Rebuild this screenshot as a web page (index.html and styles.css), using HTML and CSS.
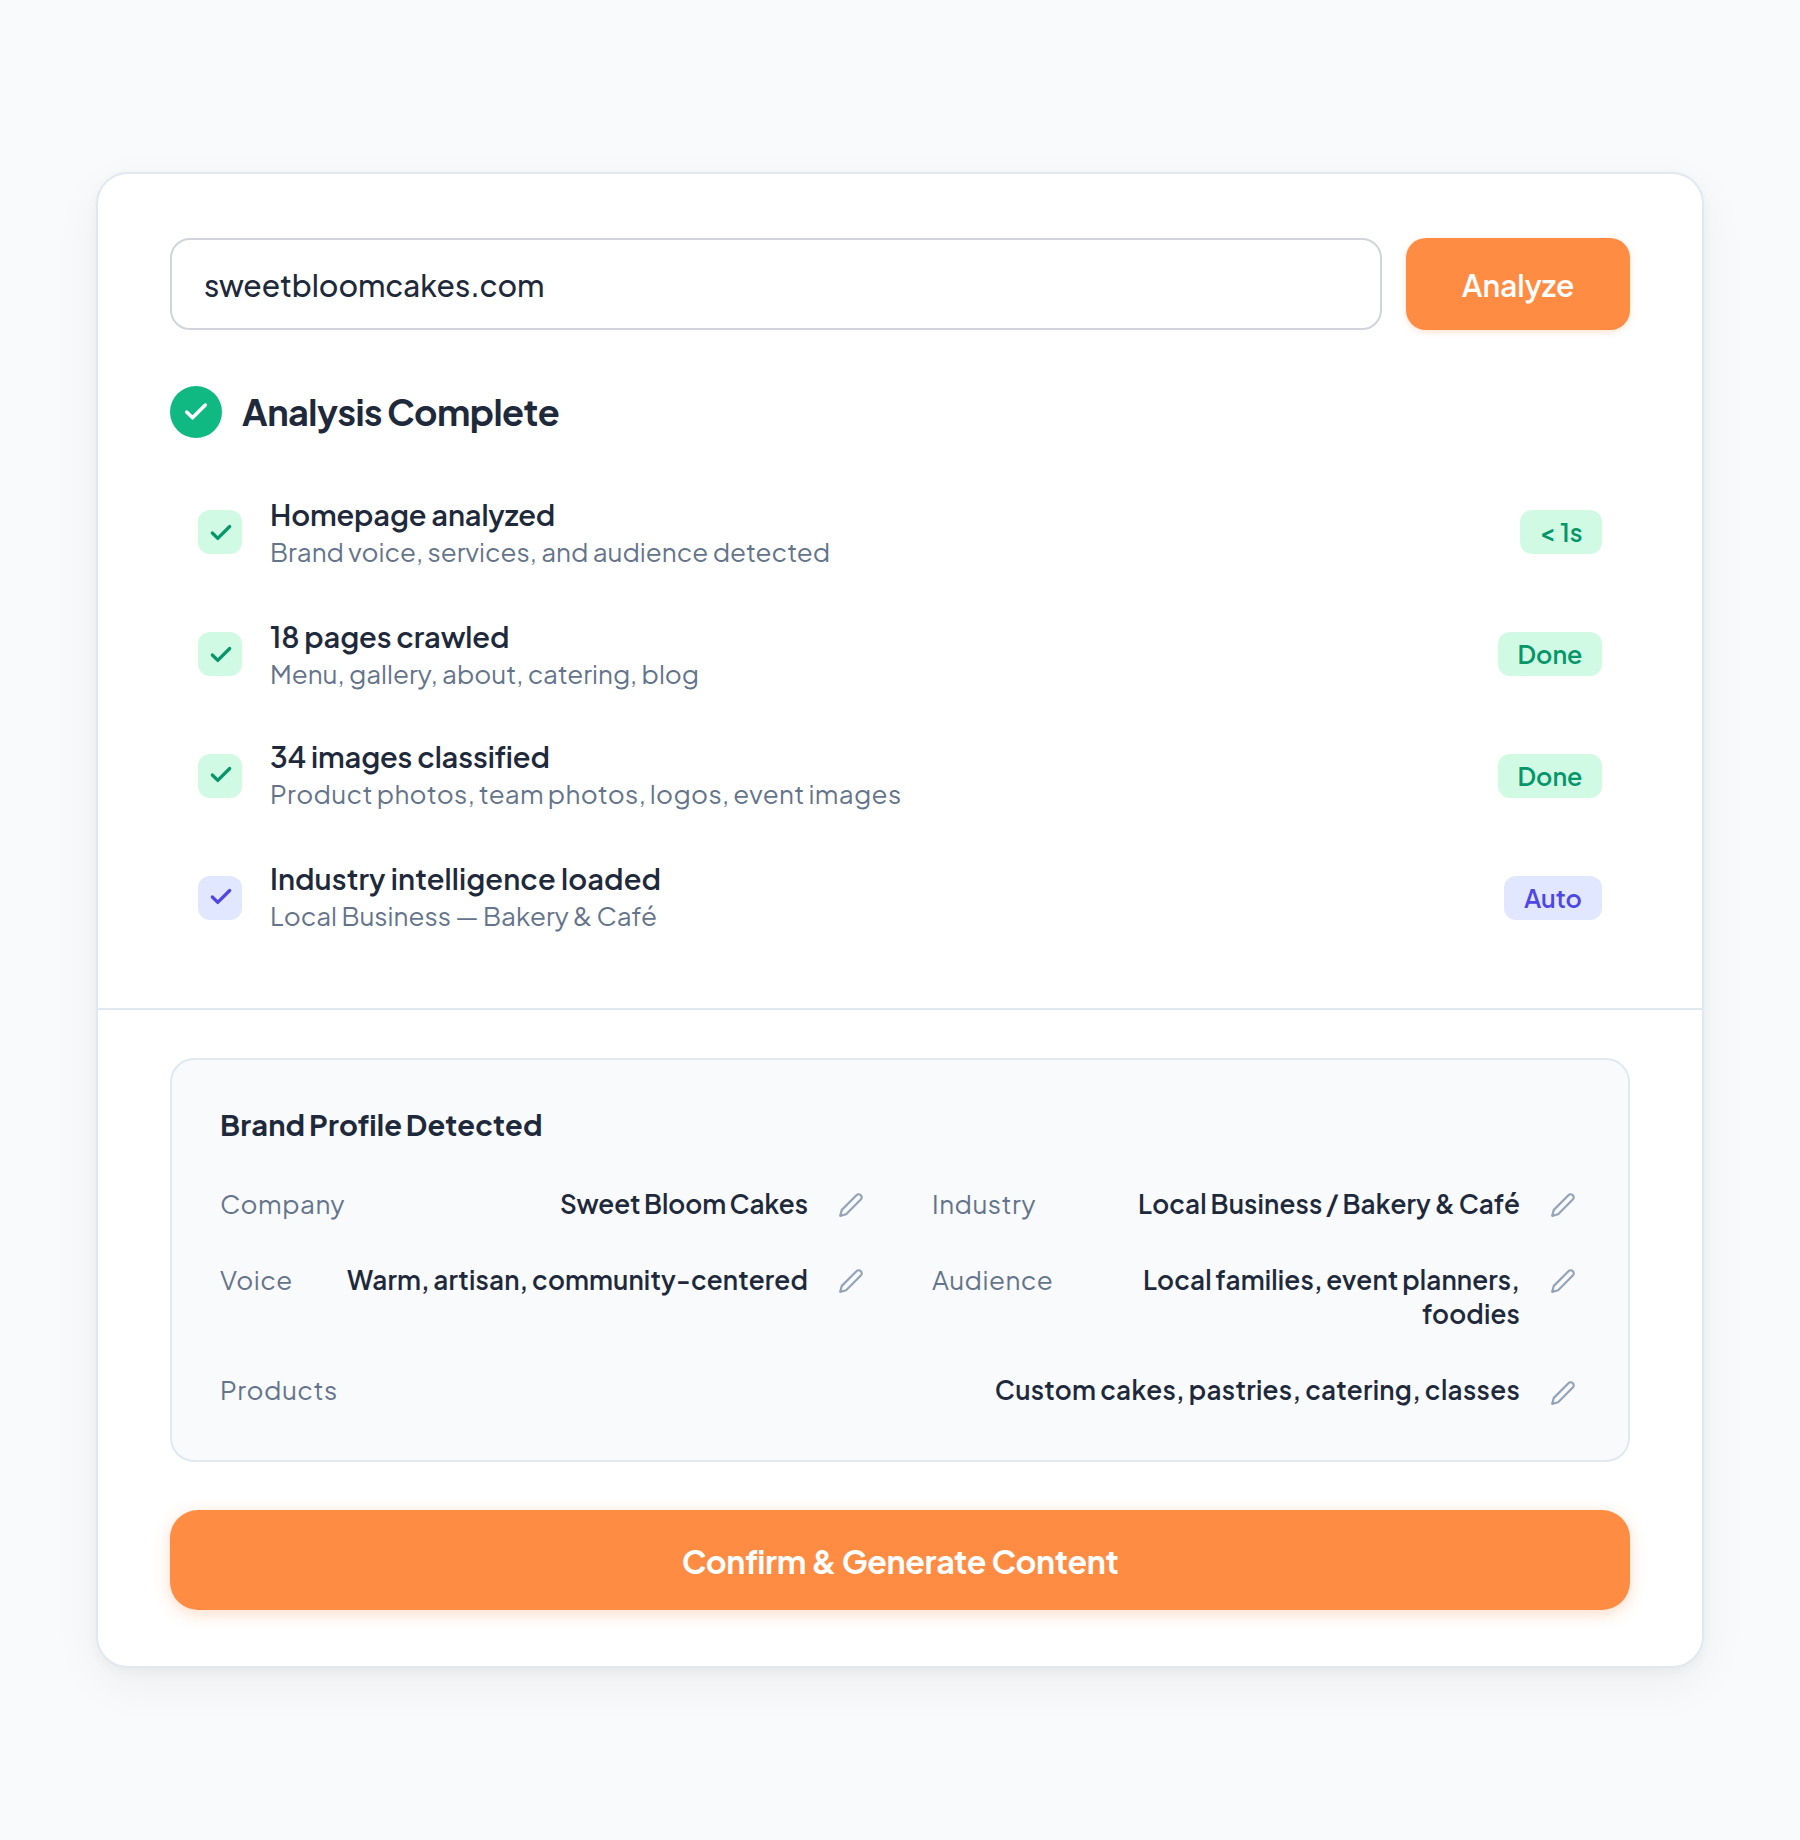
FILE: index.html
```html
<!DOCTYPE html>
<html lang="en">

<head>
    <meta charset="UTF-8" />
    <meta name="viewport" content="width=device-width, initial-scale=1" />
    <title>Brand Analysis</title>
    <link rel="stylesheet" href="styles.css">
</head>

<body>
    <svg class="sprite" aria-hidden="true">
        <symbol id="check" viewBox="0 0 24 24">
            <path d="M20 6 9 17l-5-5" />
        </symbol>
        <symbol id="pencil" viewBox="0 0 24 24">
            <path d="M17 3a2.83 2.83 0 1 1 4 4L7.5 20.5 2 22l1.5-5.5Z" />
        </symbol>
    </svg>

    <div class="card">
        <div class="analysis">
            <div class="url-row">
                <div class="url-input">sweetbloomcakes.com</div>
                <button class="analyze-btn">Analyze</button>
            </div>

            <div class="status">
                <div class="status-icon"><svg><use href="#check" /></svg></div>
                <h2>Analysis Complete</h2>
            </div>

            <div class="steps">
                <div class="step">
                    <div class="step-icon"><svg><use href="#check" /></svg></div>
                    <div class="step-text">
                        <div class="step-title">Homepage analyzed</div>
                        <div class="step-sub">Brand voice, services, and audience detected</div>
                    </div>
                    <span class="badge badge-time">&lt; 1s</span>
                </div>
                <div class="step">
                    <div class="step-icon"><svg><use href="#check" /></svg></div>
                    <div class="step-text">
                        <div class="step-title">18 pages crawled</div>
                        <div class="step-sub">Menu, gallery, about, catering, blog</div>
                    </div>
                    <span class="badge">Done</span>
                </div>
                <div class="step">
                    <div class="step-icon"><svg><use href="#check" /></svg></div>
                    <div class="step-text">
                        <div class="step-title">34 images classified</div>
                        <div class="step-sub">Product photos, team photos, logos, event images</div>
                    </div>
                    <span class="badge">Done</span>
                </div>
                <div class="step step-auto">
                    <div class="step-icon"><svg><use href="#check" /></svg></div>
                    <div class="step-text">
                        <div class="step-title">Industry intelligence loaded</div>
                        <div class="step-sub">Local Business — Bakery &amp; Café</div>
                    </div>
                    <span class="badge">Auto</span>
                </div>
            </div>
        </div>

        <div class="review">
            <div class="profile">
                <h3>Brand Profile Detected</h3>
                <div class="fields">
                    <div class="field">
                        <span class="label">Company</span>
                        <span class="value">Sweet Bloom Cakes</span>
                        <svg class="edit"><use href="#pencil" /></svg>
                    </div>
                    <div class="field">
                        <span class="label">Industry</span>
                        <span class="value">Local Business / Bakery &amp; Café</span>
                        <svg class="edit"><use href="#pencil" /></svg>
                    </div>
                    <div class="field">
                        <span class="label">Voice</span>
                        <span class="value">Warm, artisan, community-centered</span>
                        <svg class="edit"><use href="#pencil" /></svg>
                    </div>
                    <div class="field">
                        <span class="label">Audience</span>
                        <span class="value">Local families, event planners, foodies</span>
                        <svg class="edit"><use href="#pencil" /></svg>
                    </div>
                    <div class="field field-wide">
                        <span class="label">Products</span>
                        <span class="value">Custom cakes, pastries, catering, classes</span>
                        <svg class="edit"><use href="#pencil" /></svg>
                    </div>
                </div>
            </div>

            <button class="confirm-btn">Confirm &amp; Generate Content</button>
        </div>
    </div>
</body>

</html>
```

FILE: styles.css
```css
* {
    box-sizing: border-box;
}

body {
    margin: 0;
    min-height: 1840px;
    padding: 172px 96px;
    font-family: "Plus Jakarta Sans", Inter, sans-serif;
    background: #f8fafc;
    color: #1e293b;
}

h2,
h3 {
    margin: 0;
}

svg {
    display: block;
    fill: none;
    stroke: currentColor;
    stroke-linecap: round;
    stroke-linejoin: round;
}

.sprite {
    display: none;
}

.card {
    height: 1496px;
    background: #fff;
    border: 2px solid #e2e8f0;
    border-radius: 32px;
    box-shadow: 0 16px 48px rgba(0, 0, 0, 0.05), 0 4px 12px rgba(0, 0, 0, 0.04);
}

.analysis {
    height: 836px;
    padding: 64px 72px 0;
    border-bottom: 2px solid #e2e8f0;
}

.url-row {
    display: flex;
    gap: 24px;
    height: 92px;
}

.url-input {
    flex: 1;
    display: flex;
    align-items: center;
    padding: 2px 32px 0;
    border: 2px solid #d1d5db;
    border-radius: 20px;
    font-size: 30px;
    font-weight: 500;
    letter-spacing: -0.08px;
}

button {
    border: none;
    background: #ff8c42;
    color: #fff;
    font-family: inherit;
    cursor: pointer;
}

.analyze-btn {
    width: 224px;
    padding: 2px 0 0;
    border-radius: 20px;
    font-size: 30px;
    font-weight: 600;
    box-shadow: 0 2px 6px rgba(255, 140, 66, 0.25);
}

.status {
    display: flex;
    align-items: center;
    gap: 20px;
    margin-top: 56px;
}

.status-icon {
    display: flex;
    align-items: center;
    justify-content: center;
    width: 52px;
    height: 52px;
    border-radius: 50%;
    background: #10b981;
    color: #fff;
}

.status-icon svg {
    width: 28px;
    height: 28px;
    stroke-width: 3;
}

.status h2 {
    padding-bottom: 1px;
    font-size: 36px;
    font-weight: 700;
    letter-spacing: -0.5px;
    word-spacing: -1px;
}

.steps {
    display: flex;
    flex-direction: column;
    gap: 24px;
    margin-top: 45px;
}

.step {
    display: flex;
    align-items: center;
    height: 98px;
    padding: 0 28px;
}

.step-icon {
    display: flex;
    align-items: center;
    justify-content: center;
    width: 44px;
    height: 44px;
    padding: 2px 0 0 2px;
    border-radius: 12px;
    background: #d1fae5;
    color: #059669;
}

.step-icon svg {
    width: 26px;
    height: 26px;
    stroke-width: 3;
}

.step-text {
    flex: 1;
    margin-left: 28px;
}

.step-title {
    font-size: 29px;
    font-weight: 600;
    line-height: 34px;
    letter-spacing: -0.15px;
}

.step-sub {
    margin-top: 6px;
    font-size: 26px;
    line-height: 30px;
    color: #64748b;
}

/* the lower two rows sit a touch higher */
.step:nth-child(n+3) .step-icon {
    padding-top: 0;
    padding-bottom: 2px;
}

.step:nth-child(n+3) .step-text {
    padding-bottom: 4px;
}

.step:nth-child(3) .step-sub {
    letter-spacing: 0.35px;
    word-spacing: -1px;
}

.step-auto .step-title {
    letter-spacing: 0.1px;
}

.badge {
    width: 104px;
    height: 44px;
    border-radius: 12px;
    background: #d1fae5;
    color: #059669;
    font-size: 25px;
    font-weight: 600;
    line-height: 44px;
    text-align: center;
}

.badge-time {
    width: 82px;
}

.step-auto .step-icon,
.step-auto .badge {
    background: #e0e7ff;
    color: #4f46e5;
}

.step-auto .badge {
    width: 98px;
}

.review {
    padding: 48px 72px 0;
}

.profile {
    height: 404px;
    padding: 46px 48px 0;
    border: 2px solid #e2e8f0;
    border-radius: 24px;
    background: #f8fafc;
}

.profile h3 {
    font-size: 29px;
    font-weight: 700;
    line-height: 36px;
    letter-spacing: 0.15px;
    word-spacing: -1.5px;
}

.fields {
    display: grid;
    grid-template-columns: 1fr 1fr;
    gap: 42px 64px;
    margin-top: 45px;
}

.field {
    display: flex;
    align-items: flex-start;
    padding-right: 4px;
    font-size: 26px;
    line-height: 34px;
}

.field-wide {
    grid-column: span 2;
}

.label {
    color: #64748b;
    letter-spacing: 0.5px;
}

.value {
    flex: 1;
    margin-left: 24px;
    text-align: right;
    font-weight: 600;
    letter-spacing: 0.15px;
    word-spacing: -1px;
}

.field:first-child .value {
    letter-spacing: -0.05px;
}

.edit {
    width: 26px;
    height: 26px;
    margin: 5px 0 0 30px;
    color: #94a3b8;
    stroke-width: 2;
}

.field-wide .value {
    letter-spacing: 0.3px;
}

.field-wide .edit {
    margin-top: 7px;
}

.confirm-btn {
    display: block;
    width: 100%;
    height: 100px;
    margin-top: 48px;
    padding: 2px 0 0;
    border-radius: 28px;
    font-size: 32px;
    font-weight: 700;
    letter-spacing: -0.01em;
    box-shadow: 0 4px 16px rgba(255, 140, 66, 0.3);
}
```
